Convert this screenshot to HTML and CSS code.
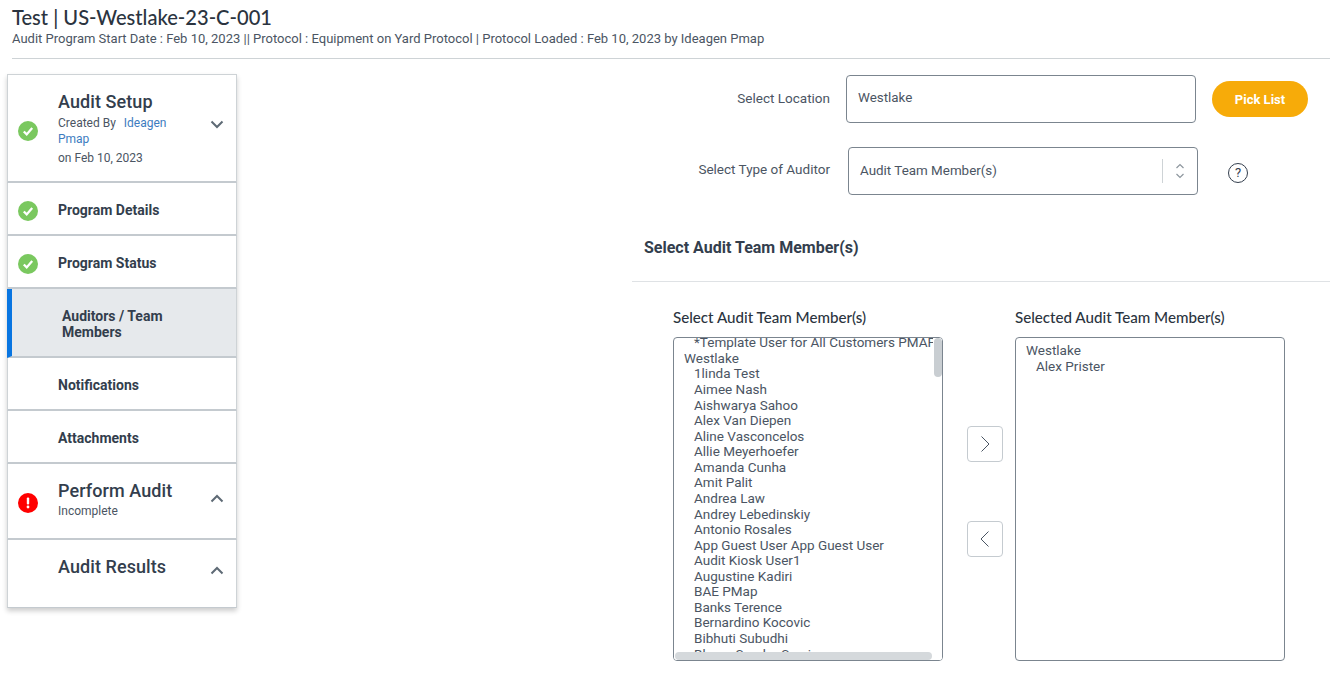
FILE: index.html
```html
<!DOCTYPE html>
<html lang="en">
<head>
    <meta charset="UTF-8">
    <meta name="viewport" content="width=device-width, initial-scale=1.0">
    <title>Auditors / Team Members</title>
    <link rel="stylesheet" href="styles.css">
</head>
<body>
    <header class="page-header">
        <h1>Test | US-Westlake-23-C-001</h1>
        <p>Audit Program Start Date : Feb 10, 2023 || Protocol : Equipment on Yard Protocol | Protocol Loaded : Feb 10, 2023 by Ideagen Pmap</p>
    </header>

    <main class="page-body">
        <nav class="steps">
            <div class="step step-setup">
                <span class="step-icon">
                    <svg viewBox="0 0 20 20" width="20" height="20"><circle cx="10" cy="10" r="10" fill="#7ac85f"/><path d="M5.8 10.5l2.9 2.9L14.2 7" fill="none" stroke="#fff" stroke-width="2.3"/></svg>
                </span>
                <div class="step-text">
                    <h2>Audit Setup</h2>
                    <p class="step-by">Created By &nbsp;<a href="#">Ideagen Pmap</a></p>
                    <p class="step-on">on Feb 10, 2023</p>
                </div>
                <svg class="chevron chevron-setup" viewBox="0 0 14 9" width="14" height="9"><path d="M1.5 1.5L7 7l5.5-5.5" fill="none" stroke="#5e6a75" stroke-width="2"/></svg>
            </div>
            <div class="step step-small">
                <span class="step-icon">
                    <svg viewBox="0 0 20 20" width="20" height="20"><circle cx="10" cy="10" r="10" fill="#7ac85f"/><path d="M5.8 10.5l2.9 2.9L14.2 7" fill="none" stroke="#fff" stroke-width="2.3"/></svg>
                </span>
                <h3>Program Details</h3>
            </div>
            <div class="step step-small">
                <span class="step-icon">
                    <svg viewBox="0 0 20 20" width="20" height="20"><circle cx="10" cy="10" r="10" fill="#7ac85f"/><path d="M5.8 10.5l2.9 2.9L14.2 7" fill="none" stroke="#fff" stroke-width="2.3"/></svg>
                </span>
                <h3>Program Status</h3>
            </div>
            <div class="step step-active">
                <h3>Auditors / Team Members</h3>
            </div>
            <div class="step step-small">
                <span class="step-icon"></span>
                <h3>Notifications</h3>
            </div>
            <div class="step step-small">
                <span class="step-icon"></span>
                <h3>Attachments</h3>
            </div>
            <div class="step step-perform">
                <span class="step-icon">
                    <svg viewBox="0 0 20 20" width="20" height="20"><circle cx="10" cy="10" r="10" fill="#f00"/><rect x="8.8" y="4.5" width="2.4" height="7" rx="1" fill="#fff"/><circle cx="10" cy="14" r="1.4" fill="#fff"/></svg>
                </span>
                <div class="step-text">
                    <h2>Perform Audit</h2>
                    <p class="step-by">Incomplete</p>
                </div>
                <svg class="chevron" viewBox="0 0 14 9" width="14" height="9"><path d="M1.5 7.5L7 2l5.5 5.5" fill="none" stroke="#5e6a75" stroke-width="2"/></svg>
            </div>
            <div class="step step-results">
                <span class="step-icon"></span>
                <div class="step-text">
                    <h2>Audit Results</h2>
                </div>
                <svg class="chevron" viewBox="0 0 14 9" width="14" height="9"><path d="M1.5 7.5L7 2l5.5 5.5" fill="none" stroke="#5e6a75" stroke-width="2"/></svg>
            </div>
        </nav>

        <section class="panel">
            <div class="form-row row-location">
                <label class="form-label">Select Location</label>
                <div class="field field-location">Westlake</div>
                <button class="pick-btn">Pick List</button>
            </div>
            <div class="form-row row-type">
                <label class="form-label">Select Type of Auditor</label>
                <div class="field field-type">
                    <span class="field-value">Audit Team Member(s)</span>
                    <span class="field-arrows">
                        <svg viewBox="0 0 10 18" width="10" height="18"><path d="M1.5 6L5 2.5 8.5 6M1.5 12L5 15.5 8.5 12" fill="none" stroke="#8d969e" stroke-width="1.2"/></svg>
                    </span>
                </div>
                <span class="help-icon">?</span>
            </div>

            <h3 class="panel-title">Select Audit Team Member(s)</h3>

            <div class="picker">
                <div class="picker-col">
                    <h4>Select Audit Team Member(s)</h4>
                    <div class="list-box">
                        <ul class="list list-scrolled">
                            <li class="indent">*Template User for All Customers PMAP</li>
                            <li>Westlake</li>
                            <li class="indent">1linda Test</li>
                            <li class="indent">Aimee Nash</li>
                            <li class="indent">Aishwarya Sahoo</li>
                            <li class="indent">Alex Van Diepen</li>
                            <li class="indent">Aline Vasconcelos</li>
                            <li class="indent">Allie Meyerhoefer</li>
                            <li class="indent">Amanda Cunha</li>
                            <li class="indent">Amit Palit</li>
                            <li class="indent">Andrea Law</li>
                            <li class="indent">Andrey Lebedinskiy</li>
                            <li class="indent">Antonio Rosales</li>
                            <li class="indent">App Guest User App Guest User</li>
                            <li class="indent">Audit Kiosk User1</li>
                            <li class="indent">Augustine Kadiri</li>
                            <li class="indent">BAE PMap</li>
                            <li class="indent">Banks Terence</li>
                            <li class="indent">Bernardino Kocovic</li>
                            <li class="indent">Bibhuti Subudhi</li>
                            <li class="indent">Bhanu Sundar Sarvi</li>
                        </ul>
                        <span class="scroll-v"></span>
                        <span class="scroll-h"></span>
                    </div>
                </div>
                <div class="move-btns">
                    <button class="move-btn"><svg viewBox="0 0 10 18" width="10" height="18"><path d="M1.5 1.5L9 9l-7.5 7.5" fill="none" stroke="#4a5563" stroke-width="1"/></svg></button>
                    <button class="move-btn"><svg viewBox="0 0 10 18" width="10" height="18"><path d="M8.5 1.5L1 9l7.5 7.5" fill="none" stroke="#4a5563" stroke-width="1"/></svg></button>
                </div>
                <div class="picker-col">
                    <h4>Selected Audit Team Member(s)</h4>
                    <div class="list-box list-box-selected">
                        <ul class="list">
                            <li>Westlake</li>
                            <li class="indent">Alex Prister</li>
                        </ul>
                    </div>
                </div>
            </div>
        </section>
    </main>
</body>
</html>
```

FILE: styles.css
```css
* {
    box-sizing: border-box;
}
html, body {
    height: 673px;
    overflow: hidden;
}
body {
    margin: 0;
    background: #fff;
    color: #333e4d;
    font-family: 'Roboto', sans-serif;
    font-size: 13px;
}
h1, h2, h3, h4, p, ul {
    margin: 0;
    padding: 0;
}
.page-header {
    margin-left: 12px;
    height: 59px;
    padding-top: 5px;
    border-bottom: 1px solid #ced3d6;
}
.page-header h1 {
    font-family: 'Lato', sans-serif;
    font-size: 20.1px;
    font-weight: 500;
    line-height: 24px;
    margin-bottom: 2px;
    color: #2b3440;
}
.page-header p {
    font-size: 13px;
    line-height: 16px;
    color: #4b5563;
}
.page-body {
    display: flex;
    padding: 15px 0 0 7px;
}
.steps {
    width: 230px;
    flex-shrink: 0;
    height: 534px;
    box-shadow: 0 3px 5px rgba(0,0,0,0.2);
}
.step {
    display: flex;
    align-items: center;
    background: #fff;
    border: 1px solid #ced3d6;
    border-bottom: 2px solid #c4cacf;
    padding-left: 10px;
}
.step + .step {
    border-top: 0;
}
.step-icon {
    width: 40px;
    height: 20px;
    flex-shrink: 0;
}
.step h2 {
    font-size: 18px;
    font-weight: 500;
    line-height: 22px;
    letter-spacing: 0.08px;
    color: #333e4d;
}
.step h3 {
    font-size: 14px;
    font-weight: 700;
    line-height: 16px;
    margin-top: -2px;
    color: #333e4d;
}
.step-text {
    flex: 1;
    min-width: 0;
}
.step-by, .step-on {
    font-size: 12px;
    line-height: 16px;
    color: #4b5563;
}
.step-by a {
    margin-left: 2px;
    color: #3d7cc0;
    text-decoration: none;
}
.step-on {
    margin-top: 3px;
}
.chevron {
    margin: 0 12px 0 12px;
    flex-shrink: 0;
}
.step-setup {
    height: 109px;
}
.step-setup .step-icon {
    margin-top: 6px;
}
.step-setup .step-text {
    padding-right: 20px;
}
.step-setup h2 {
    margin-bottom: 2px;
}
.chevron-setup {
    margin-top: -8px;
}
.step-small {
    height: 53px;
    padding-top: 5px;
}
.step-active {
    height: 69px;
    padding-top: 5px;
    background: #e6e9ec;
    border-left: 5px solid #0875e1;
    padding-left: 50px;
    padding-right: 40px;
}
.step-perform {
    height: 76px;
}
.step-perform h2 {
    margin-top: -4px;
    margin-bottom: 1px;
}
.step-perform .step-icon {
    margin-top: 4px;
}
.step-perform .chevron {
    margin-top: -6px;
}
.step-results {
    height: 68px;
    border-bottom-width: 1px;
}
.step-results .step-text {
    margin-top: -14px;
}
.step-results .chevron {
    margin-top: -6px;
}
.panel {
    width: 698px;
    margin-left: auto;
    margin-right: 0;
}
.form-row {
    display: flex;
    align-items: center;
}
.form-label {
    width: 198px;
    text-align: right;
    font-size: 13.5px;
    line-height: 16px;
    color: #4b5563;
    flex-shrink: 0;
}
.field {
    border: 1px solid #7b858f;
    border-radius: 4px;
    height: 48px;
    font-size: 13.4px;
    color: #4b5563;
    display: flex;
    align-items: center;
}
.row-location {
    height: 48px;
    margin-top: 1px;
}
.row-location .form-label {
    margin-top: -2px;
}
.field-location {
    width: 350px;
    margin-left: 16px;
    padding: 0 11px 3px;
}
.pick-btn {
    margin-left: 16px;
    width: 96px;
    height: 36px;
    border: 0;
    border-radius: 18px;
    background: #f7ab09;
    color: #fff;
    font-family: 'Roboto', sans-serif;
    font-size: 13px;
    font-weight: 700;
}
.row-type {
    height: 48px;
    margin-top: 24px;
}
.row-type .form-label {
    margin-top: -5px;
}
.field-type {
    width: 350px;
    margin-left: 18px;
    padding-left: 11px;
}
.field-value {
    flex: 1;
    padding-bottom: 2px;
}
.field-arrows {
    width: 35px;
    height: 24px;
    border-left: 1px solid #ced3d6;
    display: flex;
    align-items: center;
    justify-content: center;
}
.help-icon {
    width: 20px;
    height: 20px;
    margin: 3px 0 0 30px;
    border: 1px solid #333e4d;
    border-radius: 50%;
    font-size: 13px;
    line-height: 18px;
    text-align: center;
    color: #333e4d;
}
.panel-title {
    margin-top: 43px;
    padding: 0 0 23px 12px;
    border-bottom: 1px solid #dfe2e5;
    font-size: 16px;
    font-weight: 700;
    line-height: 20px;
    color: #333e4d;
}
.picker {
    display: flex;
    padding: 25px 0 0 41px;
}
.picker-col h4 {
    font-family: 'Lato', sans-serif;
    font-size: 15.15px;
    font-weight: 500;
    line-height: 20px;
    color: #2b3440;
    margin-bottom: 10px;
}
.list-box {
    position: relative;
    width: 270px;
    height: 324px;
    border: 1px solid #7b858f;
    border-radius: 4px;
    overflow: hidden;
}
.list {
    list-style: none;
    padding: 5px 10px;
    font-size: 13.5px;
    line-height: 15.56px;
    white-space: nowrap;
    color: #4b5563;
}
.list-scrolled {
    margin-top: -2.7px;
    padding-top: 0;
}
.indent {
    padding-left: 10px;
}
/* scrollbars lie over the list, white track hides the clipped text */
.scroll-v {
    position: absolute;
    top: 0;
    right: 0;
    width: 9px;
    height: 100%;
    background: #fff;
}
.scroll-v::after {
    content: "";
    position: absolute;
    top: 0;
    right: 0;
    width: 8px;
    height: 39px;
    border-radius: 4px;
    background: #c9ced2;
}
.scroll-h {
    position: absolute;
    left: 0;
    bottom: 0;
    width: 100%;
    height: 8px;
    background: #fff;
}
.scroll-h::after {
    content: "";
    position: absolute;
    left: 1px;
    bottom: 0;
    width: 257px;
    height: 8px;
    border-radius: 4px;
    background: #d5d9dc;
}
.move-btns {
    width: 72px;
    padding: 119px 0 0 24px;
    flex-shrink: 0;
}
.move-btn {
    display: flex;
    align-items: center;
    justify-content: center;
    width: 36px;
    height: 36px;
    padding: 0;
    background: #fff;
    border: 1px solid #c5cbd0;
    border-radius: 4px;
    margin-bottom: 59px;
}
```
